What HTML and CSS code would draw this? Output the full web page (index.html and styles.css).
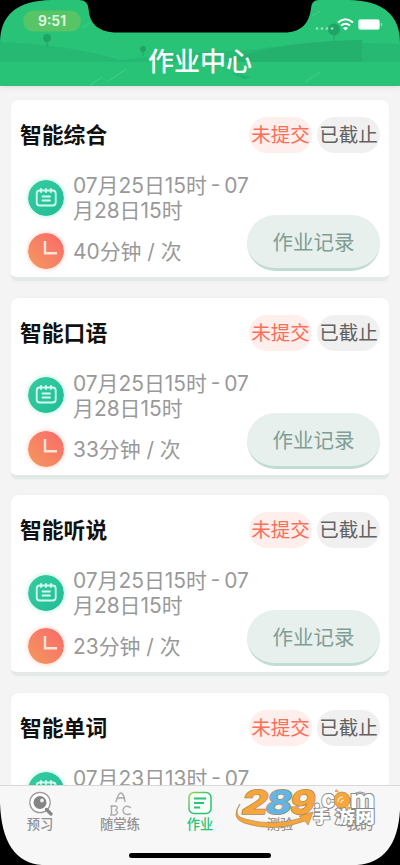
FILE: index.html
```html
<!DOCTYPE html>
<html lang="zh-CN">
<head>
<meta charset="utf-8">
<title>作业中心</title>
<link rel="stylesheet" href="styles.css">
</head>
<body>
<svg class="defs" width="0" height="0">
  <defs>
    <linearGradient id="teal" x1="0" y1="0" x2="1" y2="1"><stop offset="0" stop-color="#36cba0"/><stop offset="1" stop-color="#20bd96"/></linearGradient>
    <linearGradient id="coral" x1="1" y1="0" x2="0" y2="1"><stop offset="0" stop-color="#fb686b"/><stop offset="1" stop-color="#f39a5d"/></linearGradient>
    <symbol id="calendar" viewBox="0 0 36 36">
      <circle cx="18" cy="18" r="18" fill="url(#teal)"/>
      <g fill="none" stroke="#d4fff0" stroke-width="1.8" stroke-linecap="round" stroke-linejoin="round">
        <rect x="8.700" y="10.500" width="19" height="15" rx="3"/>
        <path d="M13 9v3M18 9v3M23 9v3M14.500 16.500h7.500M14.500 20.500h7.500"/>
      </g>
    </symbol>
    <symbol id="clock" viewBox="0 0 36 36">
      <circle cx="18" cy="18" r="18" fill="url(#coral)"/>
      <path d="M17 8v12.3h12" fill="none" stroke="#ffe4d8" stroke-width="2.4"/>
    </symbol>
  </defs>
</svg>
<div class="phone">
  <header class="header">
    <svg class="scene" viewBox="0 0 400 86" width="400" height="86">
      <rect width="400" height="86" fill="#29c378"/>
      <path d="M0 42Q65 44 120 60L180 53L250 50Q310 41 362 40L362 43L400 44V62H0Z" fill="#26b973"/>
      <path d="M225 62Q270 42 362 40V62Z" fill="#24b06d"/>
      <g fill="#20a466"><circle cx="47" cy="38" r="4"/><circle cx="143" cy="49" r="3"/><circle cx="334" cy="29.500" r="6"/></g>
      <path d="M47 40v7M143 50v6M334 33v8" stroke="#20a466" stroke-width="1"/>
      <path d="M82 28l9-6M90 85l12-8M107 82l19-13M305 82l15-10M312 16l8-5" stroke="#43cf8b" stroke-width="1"/>
      <path d="M229 72l22 5-7 2z" fill="#24b36f"/>
      <path d="M0 0H56Q0-1 0 43ZM400 0H344Q400-1 400 43Z" fill="#000"/>
      <path d="M79 0Q88 0 88.500 9Q90 31 114 32.500H287Q308 31 311 9Q311 0 319 0Z" fill="#000"/>
      <rect x="23" y="10.500" width="58" height="21" rx="10.500" fill="#57c466"/>
      <g fill="#93e3bb"><circle cx="317" cy="28.500" r="1.300"/><circle cx="322" cy="28.500" r="1.300"/><circle cx="327" cy="28.500" r="1.300"/><circle cx="332" cy="28.500" r="1.300"/></g>
      <g fill="none" stroke="#fff" stroke-width="2"><path d="M338 22.500Q345.500 16 353 22.500M341 25.600Q345.500 21.800 350 25.600"/></g>
      <path d="M343 28Q345.500 26 348 28L345.500 30.500Z" fill="#fff"/>
      <rect x="358.500" y="19.500" width="21" height="10" rx="2" fill="#fff" stroke="#a4ebc9" stroke-width="1"/>
      <path d="M381.500 23v3" stroke="#7eddb0" stroke-width="1.500"/>
    </svg>
    <span class="time">9:51</span>
    <h1 class="heading">作业中心</h1>
  </header>

  <main class="list">
    <article class="card">
      <div class="top"><h2>智能综合</h2><span class="tag red">未提交</span><span class="tag gray">已截止</span></div>
      <div class="row date"><svg class="icon teal"><use href="#calendar"/></svg><p>07月25日15时 - 07<br>月28日15时</p></div>
      <div class="row length"><svg class="icon coral"><use href="#clock"/></svg><p>40分钟 / 次</p><button>作业记录</button></div>
    </article>
    <article class="card">
      <div class="top"><h2>智能口语</h2><span class="tag red">未提交</span><span class="tag gray">已截止</span></div>
      <div class="row date"><svg class="icon teal"><use href="#calendar"/></svg><p>07月25日15时 - 07<br>月28日15时</p></div>
      <div class="row length"><svg class="icon coral"><use href="#clock"/></svg><p>33分钟 / 次</p><button>作业记录</button></div>
    </article>
    <article class="card">
      <div class="top"><h2>智能听说</h2><span class="tag red">未提交</span><span class="tag gray">已截止</span></div>
      <div class="row date"><svg class="icon teal"><use href="#calendar"/></svg><p>07月25日15时 - 07<br>月28日15时</p></div>
      <div class="row length"><svg class="icon coral"><use href="#clock"/></svg><p>23分钟 / 次</p><button>作业记录</button></div>
    </article>
    <article class="card last">
      <div class="top"><h2>智能单词</h2><span class="tag red">未提交</span><span class="tag gray">已截止</span></div>
      <div class="row date"><svg class="icon teal"><use href="#calendar"/></svg><p>07月23日13时 - 07</p></div>
    </article>
  </main>

  <nav class="tabs">
    <a class="tab">
      <svg viewBox="0 0 28 26" width="28" height="26"><circle cx="14" cy="12.500" r="10.200" fill="#fff" stroke="#999" stroke-width="1.200"/><circle cx="14" cy="12.500" r="6.500" fill="#858585"/><circle cx="16" cy="10.500" r="1.900" fill="#eee"/><path d="M20.500 19.500l4.500 4.500" stroke="#858585" stroke-width="3.200" stroke-linecap="round"/></svg>
      <span>预习</span>
    </a>
    <a class="tab">
      <svg viewBox="0 0 28 26" width="28" height="26" fill="none" stroke="#aaa" stroke-width="1.400" stroke-linecap="round" stroke-linejoin="round"><path d="M10 11.500Q12.500 3 15 3Q18 3.500 19 11.500M12 8.500Q15 7 18 8.500M5 16h5q3 2-.5 4q4.500 3-.5 5H4.500M5.500 16v8M24.500 17.500q-6-3.500-7.500 2.500q0 6 7.500 4"/></svg>
      <span>随堂练</span>
    </a>
    <a class="tab active">
      <svg viewBox="0 0 28 26" width="28" height="26"><defs><linearGradient id="edge" x1="0" y1="0" x2="1" y2="1"><stop stop-color="#9bd54e"/><stop offset=".5" stop-color="#29c378"/></linearGradient></defs><rect x="3" y="2.500" width="22" height="21" rx="5" fill="#f8fff9" stroke="url(#edge)" stroke-width="1.500"/><path d="M8 8.500h12M8 13h10M8 17.500h6" stroke="#29c378" stroke-width="1.800"/></svg>
      <span>作业</span>
    </a>
    <a class="tab">
      <svg viewBox="0 0 28 26" width="28" height="26"></svg>
      <span>测验</span>
    </a>
    <a class="tab">
      <svg viewBox="0 0 28 26" width="28" height="26"><circle cx="14" cy="12" r="10" fill="#ddd" stroke="#999"/></svg>
      <span>我的</span>
    </a>
  </nav>

  <svg class="watermark" viewBox="0 0 148 42" width="148" height="42">
    <path d="M5 16Q-3 28 10 31Q38 39 66 30L64 28L78 24L73 37L70 33Q38 45 9 35Q-5 30 5 16Z" fill="#f8a63b" stroke="#a98a55" stroke-width=".7"/>
    <g class="digits" transform="translate(1 26) skewX(-12)">
      <text x="4" y="0" textLength="26" lengthAdjust="spacingAndGlyphs" fill="#f8a63b">2</text>
      <text x="52" y="0" textLength="25" lengthAdjust="spacingAndGlyphs" fill="#f8a63b">9</text>
      <text x="28" y="0" textLength="26" lengthAdjust="spacingAndGlyphs" fill="#62b5e4">8</text>
    </g>
    <g class="domain">
      <text x="78" y="20" textLength="22" lengthAdjust="spacingAndGlyphs">.c</text>
      <text x="115" y="20" textLength="25" lengthAdjust="spacingAndGlyphs">m</text>
      <text class="han" x="78" y="35" textLength="17" lengthAdjust="spacingAndGlyphs">手</text>
      <text class="han" x="100" y="35" textLength="40" lengthAdjust="spacingAndGlyphs">游网</text>
    </g>
    <circle cx="107" cy="12" r="8" fill="#f8a63b" stroke="#a98a55" stroke-width=".7"/>
    <path d="M103 14q0-5 5-5M106 15q0-3 3-3" stroke="#fff2df" stroke-width="1.200" fill="none"/>
    <path d="M103 4l-2-2M100 3h3M111 18l4 3" stroke="#f8a63b" stroke-width="2" fill="none"/>
  </svg>

  <svg class="frame" viewBox="0 0 400 105" width="400" height="105"><path d="M0 43Q2 102 42 105H0ZM400 50Q397 102 357 105H400Z" fill="#000"/><rect x="129" y="93" width="142" height="5" rx="2.500" fill="#000"/></svg>
</div>
</body>
</html>
```

FILE: styles.css
```css
* { box-sizing: border-box; }
body {
  margin: 0;
  font-family: "Inter", "Noto Sans CJK SC", sans-serif;
}
.defs { position: absolute; }
.phone {
  position: relative;
  display: flex;
  flex-direction: column;
  width: 400px;
  height: 865px;
  overflow: hidden;
  background: #f4f4f4;
}
.header {
  position: relative;
  flex: none;
  height: 86px;
  box-shadow: 0 1px 5px #dcdcdc;
}
.scene { position: absolute; inset: 0; }
.time {
  position: absolute;
  left: 23px;
  top: 11px;
  width: 58px;
  text-align: center;
  font-size: 14px;
  line-height: 20px;
  font-weight: 600;
  color: #e5fbe9;
}
.heading {
  position: relative;
  margin: 0;
  padding-top: 44px;
  text-align: center;
  font-size: 26px;
  line-height: 36px;
  font-weight: 500;
  color: #fff;
}
.list {
  flex: 1;
  min-height: 0;
  overflow: hidden;
  display: flex;
  flex-direction: column;
  gap: 16.500px;
  padding: 14.400px 11px 0;
}
.card {
  flex: none;
  height: 181px;
  padding: 17px 9px 0 9px;
  border-bottom: 4px solid #e2e9e7;
  border-radius: 7px;
  background: #fff;
  box-shadow: 0 0 2px #e6e6e6;
}
.top { display: flex; align-items: center; height: 36px; }
.top h2 {
  flex: 1;
  margin: 0;
  font-size: 21.800px;
  line-height: 34px;
  font-weight: 700;
  color: #111;
}
.tag {
  width: 63px;
  height: 36px;
  border-radius: 18px;
  text-align: center;
  font-size: 19.500px;
  line-height: 36px;
  white-space: nowrap;
}
.red { background: #ffefec; color: #fa6e5c; }
.gray { margin-left: 5px; background: #f0f0f0; color: #626262; }
.row { display: flex; padding-left: 8px; }
.row p {
  margin: 0 0 0 9px;
  width: 190px;
  font-size: 20.900px;
  line-height: 25px;
  color: #999;
  white-space: nowrap;
}
.date { height: 57px; margin-top: 19px; }
.date p { padding-top: 1px; word-spacing: -2px; }
.icon { flex: none; width: 36px; height: 36px; border-radius: 50%; }
.date .icon { margin-top: 7.500px; }
.teal { box-shadow: 0 0 5px #a9f0d9; }
.coral { box-shadow: 0 0 5px #ffc9bd; }
.length { height: 43px; margin-top: 4px; }
.length p { padding-top: 6px; width: 174px; }
.length button {
  flex: none;
  width: 133px;
  height: 56px;
  margin: -18px 0 0 0;
  padding: 0 0 1px;
  border: 0;
  border-bottom: 3px solid #c1dcd2;
  border-radius: 28px;
  background: #e7f0ed;
  color: #819e94;
  font: 20.500px "Noto Sans CJK SC", sans-serif;
}
.tabs {
  flex: none;
  display: flex;
  height: 80px;
  border-top: 1px solid #d8d8d8;
  background: #f7f7f7;
}
.tab {
  flex: 1;
  display: flex;
  flex-direction: column;
  align-items: center;
  padding-top: 4px;
  font-size: 13.300px;
  line-height: 16px;
  font-weight: 500;
  color: #929292;
}
.active { color: #29c378; }
.watermark { position: absolute; left: 235px; top: 788px; }
.digits {
  font: 800 33px "Inter", sans-serif;
  stroke: #a98a55;
  stroke-width: 1.400px;
  paint-order: stroke;
}
.domain {
  font: 800 25px "Inter", sans-serif;
  fill: #fff;
  stroke: #888;
  stroke-width: 1.800px;
  paint-order: stroke;
}
.domain .han { font: 900 17px "Noto Sans CJK SC", sans-serif; }
.frame { position: absolute; left: 0; bottom: 0; }
```
